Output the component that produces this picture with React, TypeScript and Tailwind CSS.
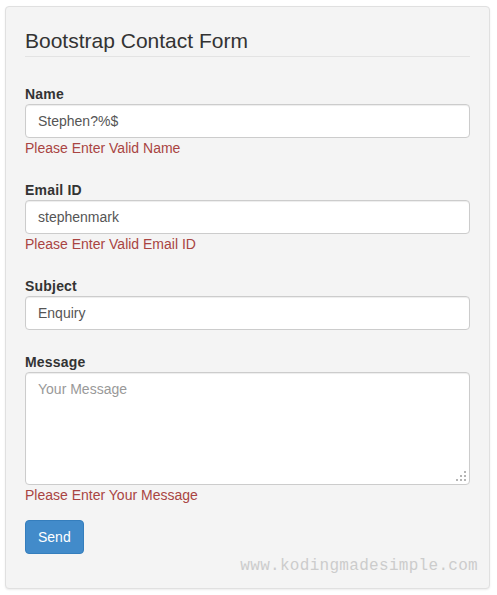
import React from "react";

const font = { fontFamily: '"Liberation Sans", Arial, sans-serif' };

function Label({ children }: { children: React.ReactNode }) {
  return <div className="text-[14px] leading-[20px] font-bold tracking-[0.2px] text-[#333]">{children}</div>;
}

function Input({ value }: { value: string }) {
  return (
    <div className="h-[34px] w-full rounded-[4px] border border-[#ccc] bg-white px-[12px] text-[14px] leading-[32px] text-[#555] shadow-[inset_0_1px_1px_rgba(0,0,0,0.075)]">
      {value}
    </div>
  );
}

function Err({ children }: { children: React.ReactNode }) {
  return <div className="text-[14px] leading-[20px] text-[#a94442]">{children}</div>;
}

export default function App() {
  return (
    <div className="min-h-[595px] w-[497px] bg-white pl-[5px] pt-[6px]" style={font}>
      <div className="w-[485px] rounded-[4px] border border-[#e0e0e0] bg-[#f4f4f4] px-[19px] pt-[22px] pb-[13px] shadow-[0_1px_2px_rgba(0,0,0,0.08)]">
        <div className="border-b border-[#e3e3e3] pb-[3px] text-[21px] leading-[24px] text-[#333]">
          Bootstrap Contact Form
        </div>

        <div className="mt-[27px]">
          <Label>Name</Label>
          <Input value="Stephen?%$" />
          <Err>Please Enter Valid Name</Err>
        </div>

        <div className="mt-[22px]">
          <Label>Email ID</Label>
          <Input value="stephenmark" />
          <Err>Please Enter Valid Email ID</Err>
        </div>

        <div className="mt-[22px]">
          <Label>Subject</Label>
          <Input value="Enquiry" />
        </div>

        <div className="mt-[22px]">
          <Label>Message</Label>
          <div className="relative h-[113px] w-full rounded-[4px] border border-[#ccc] bg-white px-[12px] pt-[6px] text-[14px] leading-[20px] text-[#999] shadow-[inset_0_1px_1px_rgba(0,0,0,0.075)]">
            Your Message
            <svg className="absolute right-[2px] bottom-[2px]" width="12" height="12" viewBox="0 0 12 12">
              <rect x="9" y="1" width="2" height="2" fill="#b5b5b5" />
              <rect x="5" y="5" width="2" height="2" fill="#b5b5b5" />
              <rect x="9" y="5" width="2" height="2" fill="#b5b5b5" />
              <rect x="1" y="9" width="2" height="2" fill="#b5b5b5" />
              <rect x="5" y="9" width="2" height="2" fill="#b5b5b5" />
              <rect x="9" y="9" width="2" height="2" fill="#b5b5b5" />
            </svg>
          </div>
          <Err>Please Enter Your Message</Err>
        </div>

        <div className="mt-[15px]">
          <button className="h-[34px] rounded-[4px] border border-[#357ebd] bg-[#428bca] px-[12px] text-[14px] leading-[20px] text-white">
            Send
          </button>
        </div>

        <div className="-mr-[8px] mt-[3px] flex justify-end">
          <span
            className="text-[16px] leading-[18px] tracking-[0.3px] text-[#cccccc]"
            style={{ fontFamily: '"Liberation Mono", "Courier New", monospace' }}
          >
            www.kodingmadesimple.com
          </span>
        </div>
      </div>
    </div>
  );
}
